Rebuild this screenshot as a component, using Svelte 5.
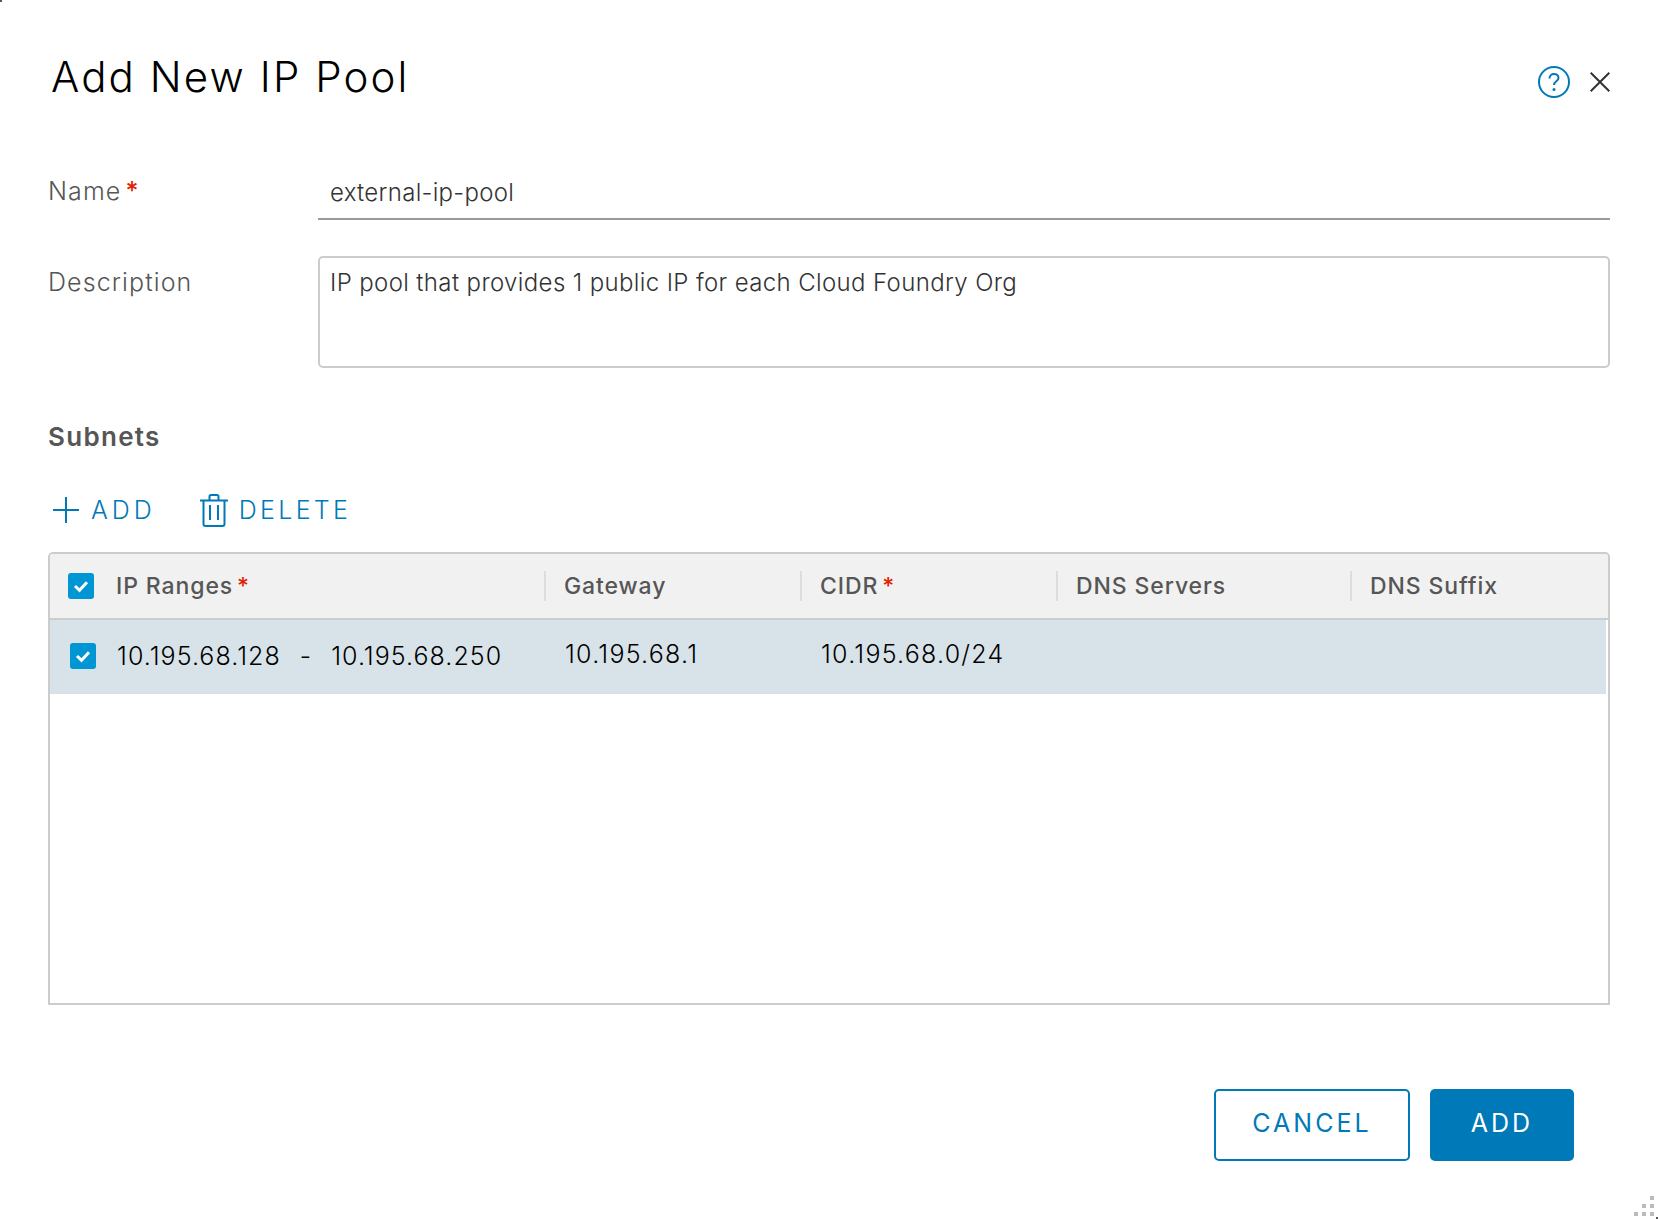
<script lang="ts">
  let name = $state('external-ip-pool')
  let description = $state('IP pool that provides 1 public IP for each Cloud Foundry Org')

  const columns = [
    { label: 'IP Ranges', required: true, width: 428 },
    { label: 'Gateway', required: false, width: 256 },
    { label: 'CIDR', required: true, width: 256 },
    { label: 'DNS Servers', required: false, width: 294 },
    { label: 'DNS Suffix', required: false, width: 0 }
  ]
</script>

{#snippet checkbox()}
  <span class="checkbox">
    <svg viewBox="0 0 26 26" width="26" height="26" aria-hidden="true">
      <path d="M7 13l4.500 4.300 7.500-8" fill="none" stroke="#fff" stroke-width="3" />
    </svg>
  </span>
{/snippet}

<div class="dialog">
  <span class="corner tl"></span>
  <span class="corner br"></span>

  <header class="head">
    <h1>Add New IP Pool</h1>
    <div class="head-icons">
      <svg class="help" viewBox="0 0 34 34" width="34" height="34" aria-label="Help">
        <circle cx="17" cy="17" r="15" fill="none" stroke="#0079b8" stroke-width="2" />
        <path d="M12.500 13.400c0-2.700 2-4.400 4.600-4.400 2.500 0 4.400 1.600 4.400 3.900 0 3.400-4.500 3.400-4.500 7.100" fill="none" stroke="#0079b8" stroke-width="2" />
        <circle cx="17" cy="24.400" r="1.500" fill="#0079b8" />
      </svg>
      <svg class="close" viewBox="0 0 20 20" width="20" height="20" aria-label="Close">
        <path d="M.7.7l18.600 18.600M19.300.7L.7 19.300" fill="none" stroke="#333" stroke-width="2" />
      </svg>
    </div>
  </header>

  <div class="field name-field">
    <label for="pool-name">Name<span class="req">*</span></label>
    <input id="pool-name" bind:value={name} />
  </div>

  <div class="field desc-field">
    <label for="pool-desc">Description</label>
    <textarea id="pool-desc" bind:value={description}></textarea>
  </div>

  <h2>Subnets</h2>

  <div class="toolbar">
    <button class="link add">
      <svg viewBox="0 0 26 26" width="26" height="26" aria-hidden="true">
        <path d="M13 0v26M0 13h26" fill="none" stroke="#0079b8" stroke-width="2" />
      </svg>
      ADD
    </button>
    <button class="link delete">
      <svg viewBox="0 0 28 33" width="28" height="33" aria-hidden="true">
        <path d="M0 6.500h28M9.500 6V2.500q0-1.500 1.500-1.500h6q1.500 0 1.500 1.500V6M3.500 7v23q0 2 2 2h17q2 0 2-2V7M10 11v15M18 11v15" fill="none" stroke="#0079b8" stroke-width="2" />
      </svg>
      DELETE
    </button>
  </div>

  <div class="grid">
    <div class="grid-head">
      <span class="check-cell">{@render checkbox()}</span>
      {#each columns as col}
        <div class="col" style:flex-basis={col.width ? col.width + 'px' : 'auto'}>
          {col.label}{#if col.required}<span class="req">*</span>{/if}
        </div>
      {/each}
    </div>
    <div class="grid-row">
      <span class="check-cell">{@render checkbox()}</span>
      <div class="range">
        <span>10.195.68.128</span>
        <span class="dash">-</span>
        <span>10.195.68.250</span>
      </div>
      <div class="cell">10.195.68.1</div>
      <div class="cell">10.195.68.0/24</div>
    </div>
  </div>

  <footer class="actions">
    <button class="btn outline">CANCEL</button>
    <button class="btn solid">ADD</button>
  </footer>

  <div class="resize" aria-hidden="true">
    {#each [0, 0, 1, 0, 1, 1, 1, 1, 1] as on}
      <i class:on></i>
    {/each}
  </div>
</div>

<style>
  :global(body) {
    margin: 0;
    background: #fff;
  }

  .dialog {
    position: relative;
    box-sizing: border-box;
    width: 1658px;
    height: 1219px;
    padding: 0 48px;
    background: #fff;
    font-family: Inter, "Noto Sans", sans-serif;
    color: #565656;
    overflow: hidden;
  }

  /* window corners peeking through */
  .corner {
    position: absolute;
    width: 2px;
    height: 2px;
    background: #555;
  }

  .corner.tl {
    top: 0;
    left: 0;
  }

  .corner.br {
    right: 0;
    bottom: 0;
  }

  .head {
    display: flex;
    justify-content: space-between;
    align-items: flex-start;
    padding: 50px 0 0 3px;
    height: 104px;
    box-sizing: border-box;
  }

  h1 {
    margin: 0;
    font-size: 42px;
    line-height: 54px;
    font-weight: 300;
    letter-spacing: 2.1px;
    color: #000;
  }

  .head-icons {
    display: flex;
    align-items: center;
    gap: 19px;
    margin-top: 15px;
  }

  .field {
    display: flex;
  }

  .field label {
    width: 270px;
    flex-shrink: 0;
    font-size: 25px;
    line-height: 30px;
    font-weight: 300;
    letter-spacing: 1.1px;
  }

  .name-field {
    height: 116px;
    padding-top: 66px;
    box-sizing: border-box;
  }

  .name-field label {
    padding-top: 6px;
  }

  .req {
    color: #e12200;
    margin-left: 4px;
    font-weight: 500;
    letter-spacing: 0;
  }

  input {
    flex: 1;
    box-sizing: border-box;
    height: 50px;
    padding: 0 12px 4px;
    border: 0;
    border-bottom: 2px solid #9a9a9a;
    font: 300 24px Inter, sans-serif;
    letter-spacing: 0.3px;
    color: #333;
    outline: none;
  }

  .desc-field {
    margin-top: 36px;
  }

  .desc-field label {
    padding-top: 11px;
  }

  textarea {
    flex: 1;
    box-sizing: border-box;
    height: 112px;
    padding: 10px 10px;
    border: 2px solid #ccc;
    border-radius: 5px;
    font: 300 24px/30px Inter, sans-serif;
    letter-spacing: 0.37px;
    color: #333;
    resize: none;
    outline: none;
  }

  h2 {
    margin: 52px 0 0;
    font-size: 26px;
    line-height: 34px;
    font-weight: 600;
    letter-spacing: 1.3px;
  }

  .toolbar {
    display: flex;
    gap: 44px;
    margin-top: 31px;
    height: 50px;
    padding-left: 5px;
  }

  .link {
    display: flex;
    align-items: center;
    padding: 0;
    border: 0;
    background: none;
    color: #0079b8;
    font: 300 25px Inter, sans-serif;
    letter-spacing: 3.3px;
  }

  .add {
    gap: 12px;
    letter-spacing: 4px;
  }

  .delete {
    gap: 11px;
  }

  .grid {
    box-sizing: border-box;
    height: 453px;
    margin-top: 17px;
    border: 2px solid #ccc;
    border-radius: 5px 5px 0 0;
  }

  .grid-head {
    display: flex;
    align-items: center;
    height: 64px;
    border-bottom: 2px solid #ccc;
    background: #f1f1f1;
    border-radius: 3px 3px 0 0;
    font-size: 23px;
    font-weight: 500;
    letter-spacing: 0.9px;
  }

  .check-cell {
    display: flex;
    flex: 0 0 67px;
    padding-left: 18px;
    box-sizing: border-box;
  }

  .grid-head .check-cell {
    flex-basis: 66px;
  }

  .checkbox {
    display: block;
    width: 26px;
    height: 26px;
    border-radius: 3px;
    background: #0095d3;
  }

  .checkbox svg {
    display: block;
  }

  .col {
    flex: 0 0 auto;
    box-sizing: border-box;
    height: 30px;
    line-height: 30px;
    padding-left: 18px;
    border-left: 2px solid #ddd;
  }

  .col:first-of-type {
    border-left: 0;
    padding-left: 0;
  }

  .grid-row {
    display: flex;
    align-items: center;
    box-sizing: border-box;
    height: 74px;
    margin-right: 2px;
    padding-bottom: 2px;
    border-bottom: 1px solid #ddd;
    background: #d8e3e9;
    font-size: 25px;
    font-weight: 300;
    letter-spacing: 1.05px;
    color: #000;
  }

  .grid-row .check-cell {
    padding-left: 20px;
  }

  .range {
    display: flex;
    flex: 0 0 448px;
    gap: 19px;
  }

  .cell {
    flex: 0 0 256px;
    margin-top: -4px;
    letter-spacing: 1.25px;
  }

  .actions {
    display: flex;
    justify-content: flex-end;
    gap: 20px;
    margin-top: 84px;
    padding-right: 36px;
  }

  .btn {
    box-sizing: border-box;
    height: 72px;
    border-radius: 5px;
    font: 400 25px Inter, sans-serif;
    letter-spacing: 3px;
    padding: 0 0 4px;
  }

  .outline {
    width: 196px;
    border: 2px solid #0079b8;
    background: #fff;
    color: #0079b8;
  }

  .solid {
    width: 144px;
    border: 0;
    background: #0079b8;
    color: #fff;
  }

  .resize {
    position: absolute;
    right: 4px;
    bottom: 3px;
    display: grid;
    grid-template-columns: repeat(3, 4px);
    gap: 4px;
  }

  .resize i {
    height: 4px;
  }

  .resize i.on {
    background: #bbb;
  }
</style>
